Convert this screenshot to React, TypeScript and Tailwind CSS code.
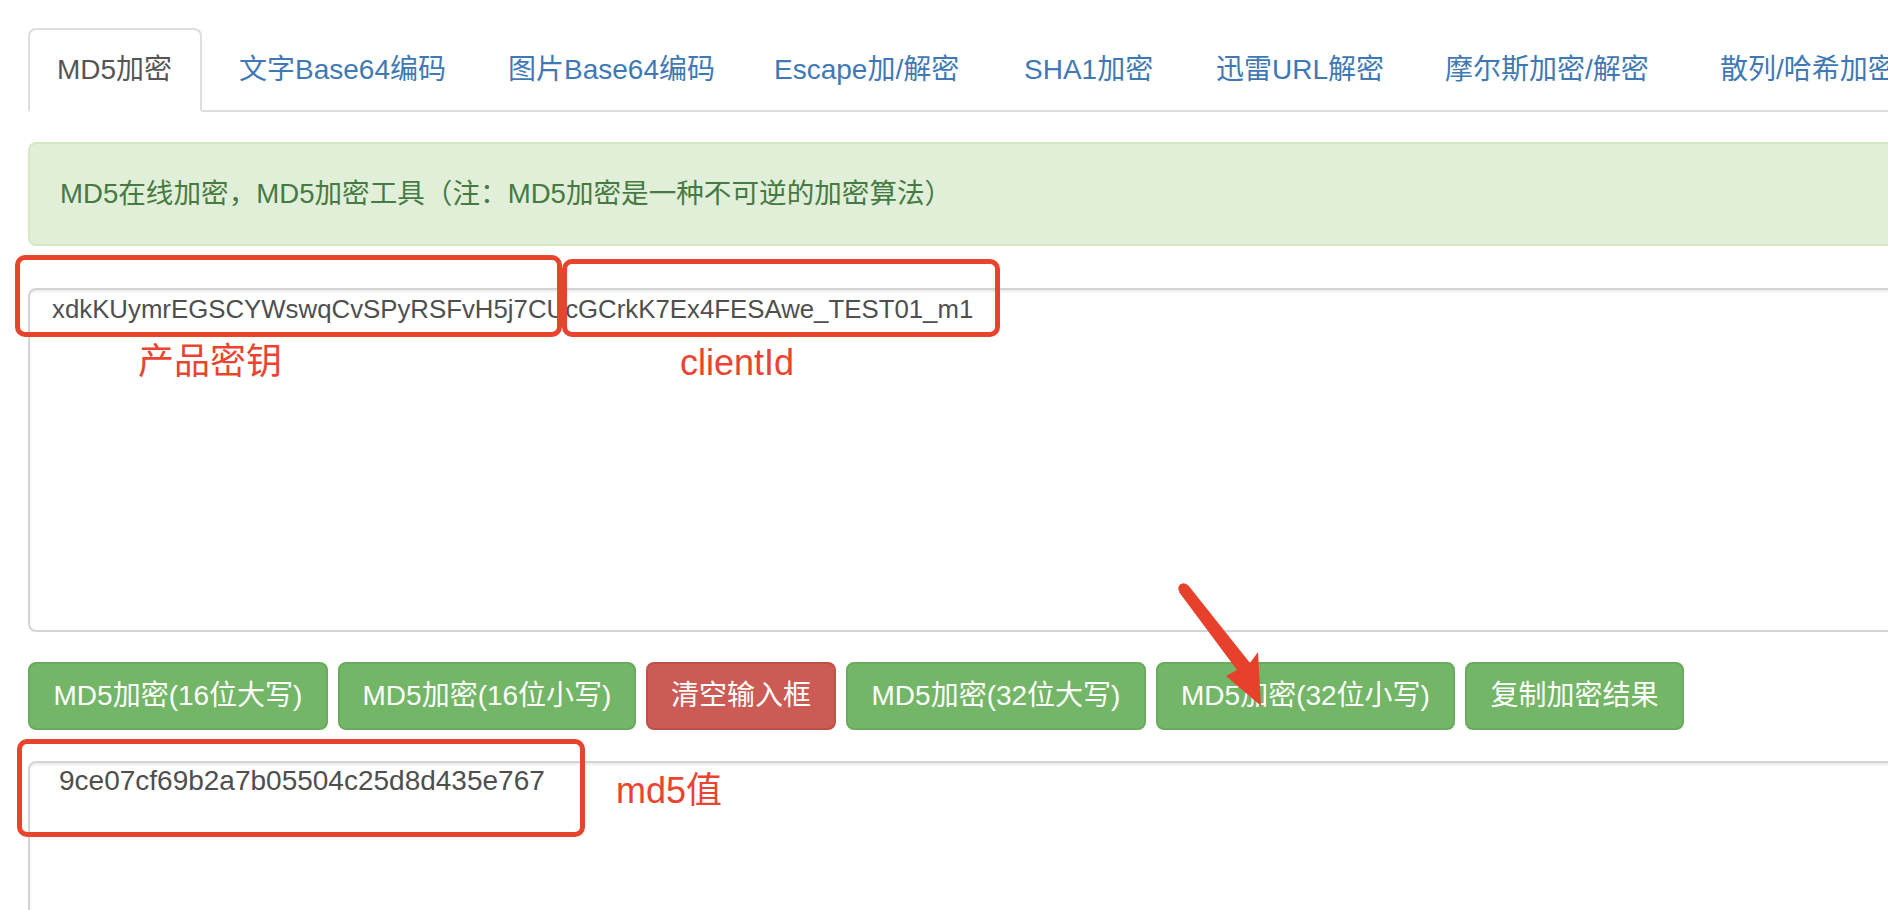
import React from "react";

const tabs: { label: string; cls: string; active?: boolean }[] = [
  { label: "MD5加密", cls: "w-[174px] pl-[27px]", active: true },
  { label: "文字Base64编码", cls: "w-[265px] pl-[31px]" },
  { label: "图片Base64编码", cls: "w-[262px] pl-[31px]" },
  { label: "Escape加/解密", cls: "w-[246px] pl-[31px]" },
  { label: "SHA1加密", cls: "w-[188px] pl-[31px]" },
  { label: "迅雷URL解密", cls: "w-[225px] pl-[31px]" },
  { label: "摩尔斯加密/解密", cls: "w-[271px] pl-[31px]" },
  { label: "散列/哈希加密", cls: "w-[260px] pl-[31px]" },
];

const buttons: { label: string; cls: string }[] = [
  { label: "MD5加密(16位大写)", cls: "w-[300px] bg-[#74b667] border-[#69ab5d]" },
  { label: "MD5加密(16位小写)", cls: "w-[298px] bg-[#74b667] border-[#69ab5d]" },
  { label: "清空输入框", cls: "w-[190px] bg-[#cb5b54] border-[#c0514a]" },
  { label: "MD5加密(32位大写)", cls: "w-[300px] bg-[#74b667] border-[#69ab5d]" },
  { label: "MD5加密(32位小写)", cls: "w-[299px] bg-[#74b667] border-[#69ab5d]" },
  { label: "复制加密结果", cls: "w-[219px] bg-[#74b667] border-[#69ab5d]" },
];

export default function App() {
  return (
    <div className="relative w-[1888px] h-[910px] overflow-hidden bg-white font-['Liberation_Sans','Noto_Sans_CJK_SC',sans-serif] text-[28px]">
      <div className="w-[2200px] pl-[28px] pt-[28px]">
        {/* Tabs */}
        <ul className="flex border-b-2 border-[#dddddd]">
          {tabs.map((t) => (
            <li key={t.label} className="mr-[4px] -mb-[2px]">
              <div
                className={
                  t.active
                    ? `${t.cls} block whitespace-nowrap border-2 border-[#dddddd] border-b-transparent bg-white rounded-t-[8px] py-[20px] leading-[40px] text-[#555555]`
                    : `${t.cls} block whitespace-nowrap border-2 border-transparent rounded-t-[8px] py-[20px] leading-[40px] text-[#3f79b5]`
                }
              >
                {t.label}
              </div>
            </li>
          ))}
        </ul>

        {/* Alert */}
        <div className="mt-[30px] border-2 border-[#d5e8c5] bg-[#e1efd9] rounded-[8px] px-[30px] py-[30px] text-[27.6px] leading-[40px] text-[#457a43] whitespace-nowrap">
          MD5在线加密，MD5加密工具（注：MD5加密是一种不可逆的加密算法）
        </div>

        {/* Input textarea */}
        <div className="mt-[42px] h-[344px] border-2 border-[#d4d4d4] rounded-[8px] shadow-[inset_0_2px_2px_rgba(0,0,0,0.075)] pl-[22px] pt-[1px] text-[25.8px] leading-[36px] text-[#4f4f4f] whitespace-nowrap">
          xdkKUymrEGSCYWswqCvSPyRSFvH5j7CUcGCrkK7Ex4FESAwe_TEST01_m1
        </div>

        {/* Buttons */}
        <div className="mt-[30px] flex gap-[10px]">
          {buttons.map((b) => (
            <div
              key={b.label}
              className={`${b.cls} h-[68px] border-2 rounded-[8px] flex items-center justify-center text-white leading-[40px] whitespace-nowrap`}
            >
              {b.label}
            </div>
          ))}
        </div>

        {/* Result textarea */}
        <div className="mt-[31px] h-[300px] border-2 border-[#d4d4d4] rounded-[8px] shadow-[inset_0_2px_2px_rgba(0,0,0,0.075)] pl-[29px] pt-[2px] text-[28px] leading-[32px] text-[#4f4f4f] whitespace-nowrap">
          9ce07cf69b2a7b05504c25d8d435e767
        </div>
      </div>

      {/* Annotations */}
      <div className="absolute left-[15px] top-[255px] w-[547px] h-[82px] border-[5px] border-[#e8432c] rounded-[10px]" />
      <div className="absolute left-[562px] top-[259px] w-[438px] h-[78px] border-[5px] border-[#e8432c] rounded-[10px]" />
      <div className="absolute left-[17px] top-[739px] w-[568px] h-[98px] border-[5px] border-[#e8432c] rounded-[10px]" />

      <div className="absolute left-[138px] top-[344px] text-[36px] leading-[36px] text-[#ea4330] whitespace-nowrap">
        产品密钥
      </div>
      <div className="absolute left-[680px] top-[345px] text-[36px] leading-[36px] text-[#ea4330] whitespace-nowrap">
        clientId
      </div>
      <div className="absolute left-[616px] top-[773px] text-[36px] leading-[36px] text-[#ea4330] whitespace-nowrap">
        md5值
      </div>

      <svg
        className="absolute left-0 top-0 pointer-events-none"
        width="1888"
        height="910"
        viewBox="0 0 1888 910"
      >
        <circle cx="1183.5" cy="588.5" r="5.2" fill="#e8412b" />
        <polygon
          points="1188,585 1250,663 1258,652 1261,706 1226,676 1237,670 1179,592"
          fill="#e8412b"
        />
      </svg>
    </div>
  );
}
